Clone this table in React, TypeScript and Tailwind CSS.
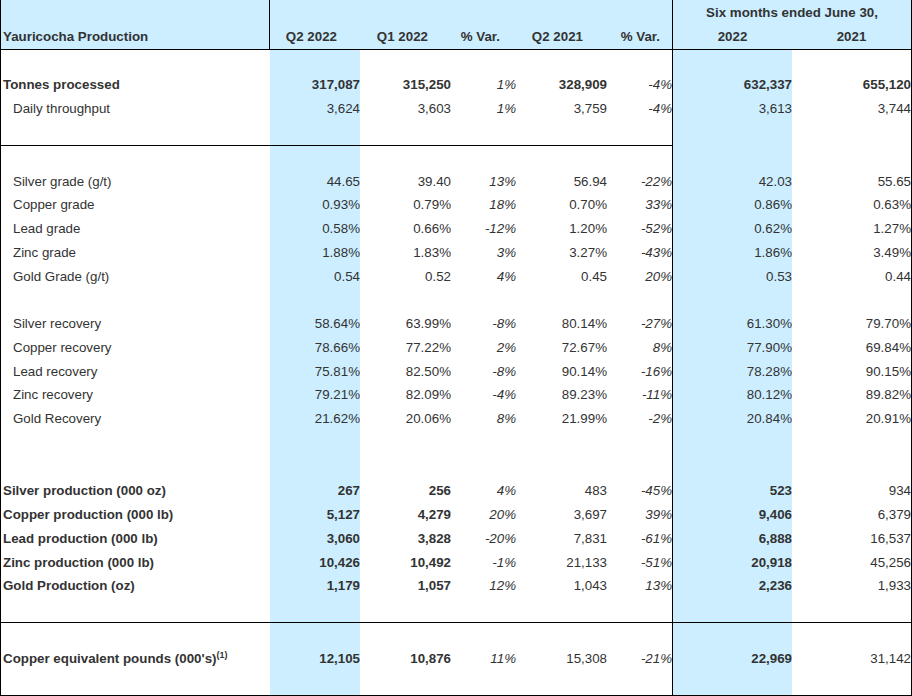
import React from "react";

type RowData = {
  label: React.ReactNode;
  indent?: boolean;
  boldLabel?: boolean;
  vals: string[];
  bold?: boolean[];
};

function Row({ d, h }: { d: RowData; h: string }) {
  const b = d.bold || [false, false, false, false, false, false, false];
  return (
    <div className={`flex ${h}`}>
      <div
        className={`w-[269px] flex items-center whitespace-nowrap ${d.indent ? "pl-[12px]" : "pl-[2px]"} ${d.boldLabel ? "font-bold" : ""}`}
      >
        {d.label}
      </div>
      <div className={`w-[90px] bg-[#cceeff] flex items-center justify-end ${b[0] ? "font-bold" : ""}`}>{d.vals[0]}</div>
      <div className={`w-[96px] flex items-center justify-end pr-[5px] ${b[1] ? "font-bold" : ""}`}>{d.vals[1]}</div>
      <div className="w-[64px] flex items-center justify-end pr-[4px] italic">{d.vals[2]}</div>
      <div className={`w-[90px] flex items-center justify-end pr-[3px] ${b[3] ? "font-bold" : ""}`}>{d.vals[3]}</div>
      <div className="w-[62px] flex items-center justify-end italic relative z-10">{d.vals[4]}</div>
      <div className={`w-[120px] border-l border-black bg-[#cceeff] flex items-center justify-end ${b[5] ? "font-bold" : ""}`}>{d.vals[5]}</div>
      <div className={`w-[119px] flex items-center justify-end ${b[6] ? "font-bold" : ""}`}>{d.vals[6]}</div>
    </div>
  );
}

function Blank({ h, line }: { h: string; line: "none" | "left" | "full" }) {
  const l = line === "none" ? "" : "border-b border-black";
  const r = line === "full" ? "border-b border-black" : "";
  return (
    <div className={`flex ${h}`}>
      <div className={`w-[269px] ${l}`} />
      <div className={`w-[90px] bg-[#cceeff] ${l}`} />
      <div className={`w-[96px] ${l}`} />
      <div className={`w-[64px] ${l}`} />
      <div className={`w-[90px] ${l}`} />
      <div className={`w-[62px] ${l}`} />
      <div className={`w-[120px] border-l border-black bg-[#cceeff] ${r}`} />
      <div className={`w-[119px] ${r}`} />
    </div>
  );
}

const BOLD_MAIN = [true, true, false, true, false, true, true];
const BOLD_PROD = [true, true, false, false, false, true, false];

const grades: RowData[] = [
  { label: "Silver grade (g/t)", indent: true, vals: ["44.65", "39.40", "13%", "56.94", "-22%", "42.03", "55.65"] },
  { label: "Copper grade", indent: true, vals: ["0.93%", "0.79%", "18%", "0.70%", "33%", "0.86%", "0.63%"] },
  { label: "Lead grade", indent: true, vals: ["0.58%", "0.66%", "-12%", "1.20%", "-52%", "0.62%", "1.27%"] },
  { label: "Zinc grade", indent: true, vals: ["1.88%", "1.83%", "3%", "3.27%", "-43%", "1.86%", "3.49%"] },
  { label: "Gold Grade (g/t)", indent: true, vals: ["0.54", "0.52", "4%", "0.45", "20%", "0.53", "0.44"] },
];

const recoveries: RowData[] = [
  { label: "Silver recovery", indent: true, vals: ["58.64%", "63.99%", "-8%", "80.14%", "-27%", "61.30%", "79.70%"] },
  { label: "Copper recovery", indent: true, vals: ["78.66%", "77.22%", "2%", "72.67%", "8%", "77.90%", "69.84%"] },
  { label: "Lead recovery", indent: true, vals: ["75.81%", "82.50%", "-8%", "90.14%", "-16%", "78.28%", "90.15%"] },
  { label: "Zinc recovery", indent: true, vals: ["79.21%", "82.09%", "-4%", "89.23%", "-11%", "80.12%", "89.82%"] },
  { label: "Gold Recovery", indent: true, vals: ["21.62%", "20.06%", "8%", "21.99%", "-2%", "20.84%", "20.91%"] },
];

const production: RowData[] = [
  { label: "Silver production (000 oz)", boldLabel: true, bold: BOLD_PROD, vals: ["267", "256", "4%", "483", "-45%", "523", "934"] },
  { label: "Copper production (000 lb)", boldLabel: true, bold: BOLD_PROD, vals: ["5,127", "4,279", "20%", "3,697", "39%", "9,406", "6,379"] },
  { label: "Lead production (000 lb)", boldLabel: true, bold: BOLD_PROD, vals: ["3,060", "3,828", "-20%", "7,831", "-61%", "6,888", "16,537"] },
  { label: "Zinc production (000 lb)", boldLabel: true, bold: BOLD_PROD, vals: ["10,426", "10,492", "-1%", "21,133", "-51%", "20,918", "45,256"] },
  { label: "Gold Production (oz)", boldLabel: true, bold: BOLD_PROD, vals: ["1,179", "1,057", "12%", "1,043", "13%", "2,236", "1,933"] },
];

export default function App() {
  return (
    <div className="w-[912px] h-[696px] bg-white border-l border-r border-b border-black flex flex-col font-['Liberation_Sans',Arial,sans-serif] text-[13.33px] text-[#333333] leading-none">
      {/* Header */}
      <div className="bg-[#cceeff] border-b border-black font-bold flex flex-col">
        <div className="flex h-[24px]">
          <div className="w-[269px] border-r border-black" />
          <div className="w-[90px]" />
          <div className="w-[96px]" />
          <div className="w-[64px]" />
          <div className="w-[90px]" />
          <div className="w-[62px]" />
          <div className="w-[239px] border-l border-black flex items-center justify-center pt-[2px]">
            Six months ended June 30,
          </div>
        </div>
        <div className="flex h-[25px]">
          <div className="w-[269px] border-r border-black flex items-center pl-[2px]">Yauricocha Production</div>
          <div className="w-[90px] flex items-center justify-end pr-[23px] whitespace-nowrap">Q2 2022</div>
          <div className="w-[96px] flex items-center justify-end pr-[28px] whitespace-nowrap">Q1 2022</div>
          <div className="w-[64px] flex items-center justify-end pr-[20px] whitespace-nowrap">% Var.</div>
          <div className="w-[90px] flex items-center justify-end pr-[27px] whitespace-nowrap">Q2 2021</div>
          <div className="w-[62px] flex items-center justify-end pr-[12px] whitespace-nowrap">% Var.</div>
          <div className="w-[120px] border-l border-black flex items-center justify-center">2022</div>
          <div className="w-[119px] flex items-center justify-center">2021</div>
        </div>
      </div>

      {/* Section 1 */}
      <Blank h="h-[23px]" line="none" />
      <Row
        h="h-[23.75px]"
        d={{ label: "Tonnes processed", boldLabel: true, bold: BOLD_MAIN, vals: ["317,087", "315,250", "1%", "328,909", "-4%", "632,337", "655,120"] }}
      />
      <Row
        h="h-[23.75px]"
        d={{ label: "Daily throughput", indent: true, vals: ["3,624", "3,603", "1%", "3,759", "-4%", "3,613", "3,744"] }}
      />
      <Blank h="h-[25.5px]" line="left" />

      {/* Section 2 */}
      <Blank h="h-[23.5px]" line="none" />
      {grades.map((d, i) => (
        <Row key={"g" + i} h="h-[23.75px]" d={d} />
      ))}
      <Blank h="h-[23.75px]" line="none" />
      {recoveries.map((d, i) => (
        <Row key={"r" + i} h="h-[23.75px]" d={d} />
      ))}
      <Blank h="h-[48.5px]" line="none" />
      {production.map((d, i) => (
        <Row key={"p" + i} h="h-[23.75px]" d={d} />
      ))}
      <Blank h="h-[25px]" line="full" />

      {/* Section 3 */}
      <Blank h="h-[23.5px]" line="none" />
      <Row
        h="h-[23.75px]"
        d={{
          label: (
            <span>
              Copper equivalent pounds (000's)
              <sup className="text-[9px]">(1)</sup>
            </span>
          ),
          boldLabel: true,
          bold: BOLD_MAIN.map((v, i) => (i === 3 || i === 6 ? false : v)),
          vals: ["12,105", "10,876", "11%", "15,308", "-21%", "22,969", "31,142"],
        }}
      />
      <div className="flex flex-1">
        <div className="w-[269px]" />
        <div className="w-[90px] bg-[#cceeff]" />
        <div className="w-[96px]" />
        <div className="w-[64px]" />
        <div className="w-[90px]" />
        <div className="w-[62px]" />
        <div className="w-[120px] border-l border-black bg-[#cceeff]" />
        <div className="w-[119px]" />
      </div>
    </div>
  );
}
